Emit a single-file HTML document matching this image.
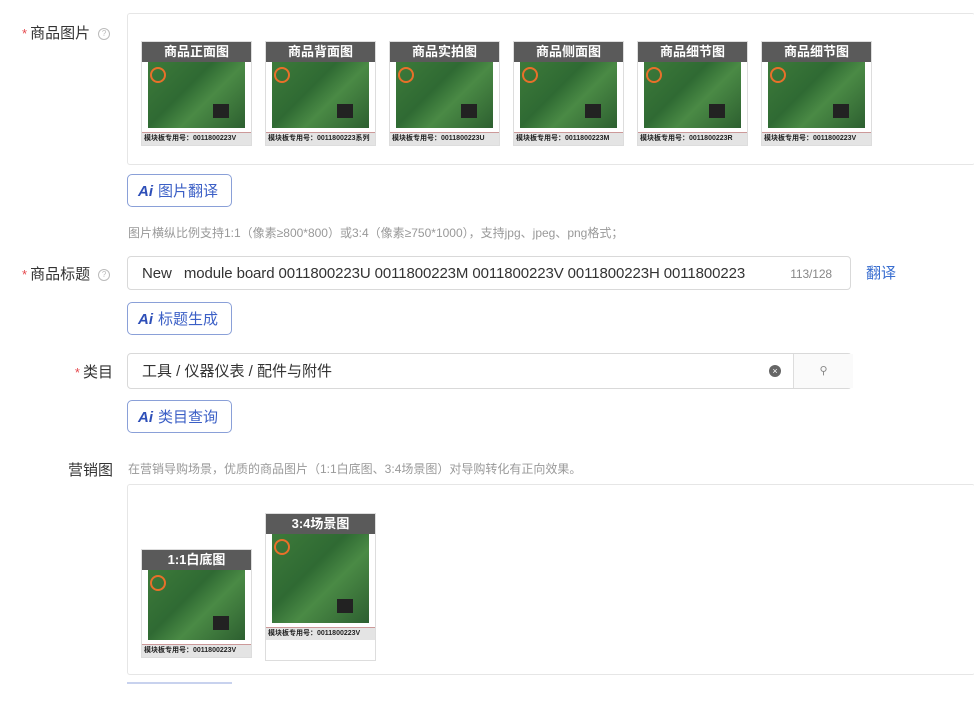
<!DOCTYPE html>
<html><head><meta charset="utf-8"><style>
body{margin:0;width:974px;height:714px;background:#fff;font-family:"Liberation Sans","Noto Sans CJK SC",sans-serif;position:relative;overflow:hidden;color:#333}
.a{position:absolute}
.lbl{font-size:15px;color:#333;text-align:right}
.lbl b{color:#e5484d;font-weight:normal;font-size:13px;margin-right:3px}
.q{display:inline-block;width:10px;height:10px;border:1px solid #bbb;border-radius:50%;font-size:8px;line-height:10px;text-align:center;color:#bbb;vertical-align:2px;margin-left:8px}
.box{border:1px solid #e6e6e6;border-radius:3px;border-right:none}
.th{position:absolute;width:109px;border:1px solid #ddd;background:#fff}
.th .h{height:20px;background:#5a5a5a;color:#fff;font-size:13px;text-align:center;line-height:20px;font-weight:bold}
.th .g{background:linear-gradient(135deg,#3d7a3a,#2f6a33 40%,#4a8a45 60%,#2d5f30);position:relative;margin:0 6px 0 6px}
.th .g:before{content:"";position:absolute;left:2px;top:5px;width:12px;height:12px;border:2px solid #e8702a;border-radius:50%}
.th .g:after{content:"";position:absolute;right:16px;bottom:10px;width:16px;height:14px;background:#222}
.th .t{font-size:7px;font-weight:bold;color:#222;background:#e4e4e4;height:12px;line-height:12px;padding-left:2px;white-space:nowrap;overflow:hidden;border-top:1px solid #c99;margin-top:4px}
.btn{border:1px solid #8aa0d8;border-radius:5px;color:#3b5fc6;font-size:15px;height:33px;line-height:33px;padding:0 10px;box-sizing:border-box;background:#fff}
.btn i{font-style:italic;font-weight:bold;color:#2e4fb8;margin-right:5px}
.inp{border:1px solid #d9d9d9;border-radius:4px;height:34px;box-sizing:border-box;font-size:15px;line-height:34px;padding-left:14px;color:#333}
</style></head><body>
<div class="a lbl" style="left:22px;top:22px;width:100px;text-align:left"><b>*</b>商品图片<span class="q">?</span></div>
<div class="a box" style="left:127px;top:13px;width:847px;height:150px"></div>

<div class="th" style="left:141px;top:41px"><div class="h">商品正面图</div><div class="g" style="height:66px"></div><div class="t">模块板专用号：0011800223V</div></div>
<div class="th" style="left:265px;top:41px"><div class="h">商品背面图</div><div class="g" style="height:66px"></div><div class="t">模块板专用号：0011800223系列</div></div>
<div class="th" style="left:389px;top:41px"><div class="h">商品实拍图</div><div class="g" style="height:66px"></div><div class="t">模块板专用号：0011800223U</div></div>
<div class="th" style="left:513px;top:41px"><div class="h">商品侧面图</div><div class="g" style="height:66px"></div><div class="t">模块板专用号：0011800223M</div></div>
<div class="th" style="left:637px;top:41px"><div class="h">商品细节图</div><div class="g" style="height:66px"></div><div class="t">模块板专用号：0011800223R</div></div>
<div class="th" style="left:761px;top:41px"><div class="h">商品细节图</div><div class="g" style="height:66px"></div><div class="t">模块板专用号：0011800223V</div></div>

<div class="a btn" style="left:127px;top:174px;width:105px"><i>Ai</i>图片翻译</div>
<div class="a" style="left:128px;top:224px;font-size:12px;color:#999">图片横纵比例支持1:1（像素≥800*800）或3:4（像素≥750*1000），支持jpg、jpeg、png格式；</div>

<div class="a lbl" style="left:22px;top:263px;width:100px;text-align:left"><b>*</b>商品标题<span class="q">?</span></div>
<div class="a inp" style="left:127px;top:256px;width:724px;letter-spacing:-0.1px">New &nbsp; module board 0011800223U 0011800223M 0011800223V 0011800223H 0011800223<span style="position:absolute;right:18px;font-size:12px;color:#888">113/128</span></div>
<div class="a" style="left:866px;top:262px;font-size:15px;color:#3b6fd0">翻译</div>
<div class="a btn" style="left:127px;top:302px;width:105px"><i>Ai</i>标题生成</div>

<div class="a lbl" style="left:20px;top:361px;width:93px"><b>*</b>类目</div>
<div class="a inp" style="left:127px;top:353px;width:725px;height:36px;line-height:36px">工具 / 仪器仪表 / 配件与附件
<span style="position:absolute;left:641px;top:11px;width:12px;height:12px;border-radius:50%;background:#666;color:#fff;font-size:9px;line-height:12px;text-align:center">×</span>
<span style="position:absolute;left:665px;top:0;width:59px;height:34px;border-left:1px solid #ddd;background:#fafafa;font-size:11px;line-height:34px;text-align:center;color:#888">⚲</span></div>
<div class="a btn" style="left:127px;top:400px;width:105px"><i>Ai</i>类目查询</div>

<div class="a lbl" style="left:20px;top:459px;width:93px">营销图</div>
<div class="a" style="left:128px;top:460px;font-size:12px;color:#999">在营销导购场景，优质的商品图片（1:1白底图、3:4场景图）对导购转化有正向效果。</div>
<div class="a box" style="left:127px;top:484px;width:847px;height:189px"></div>
<div class="th" style="left:141px;top:549px"><div class="h">1:1白底图</div><div class="g" style="height:70px"></div><div class="t">模块板专用号：0011800223V</div></div>
<div class="th" style="left:265px;top:513px"><div class="h">3:4场景图</div><div class="g" style="height:89px"></div><div class="t">模块板专用号：0011800223V</div><div style="height:20px"></div></div>
<div class="a" style="left:127px;top:682px;width:105px;height:2px;background:#c8d2ee"></div>
</body></html>
